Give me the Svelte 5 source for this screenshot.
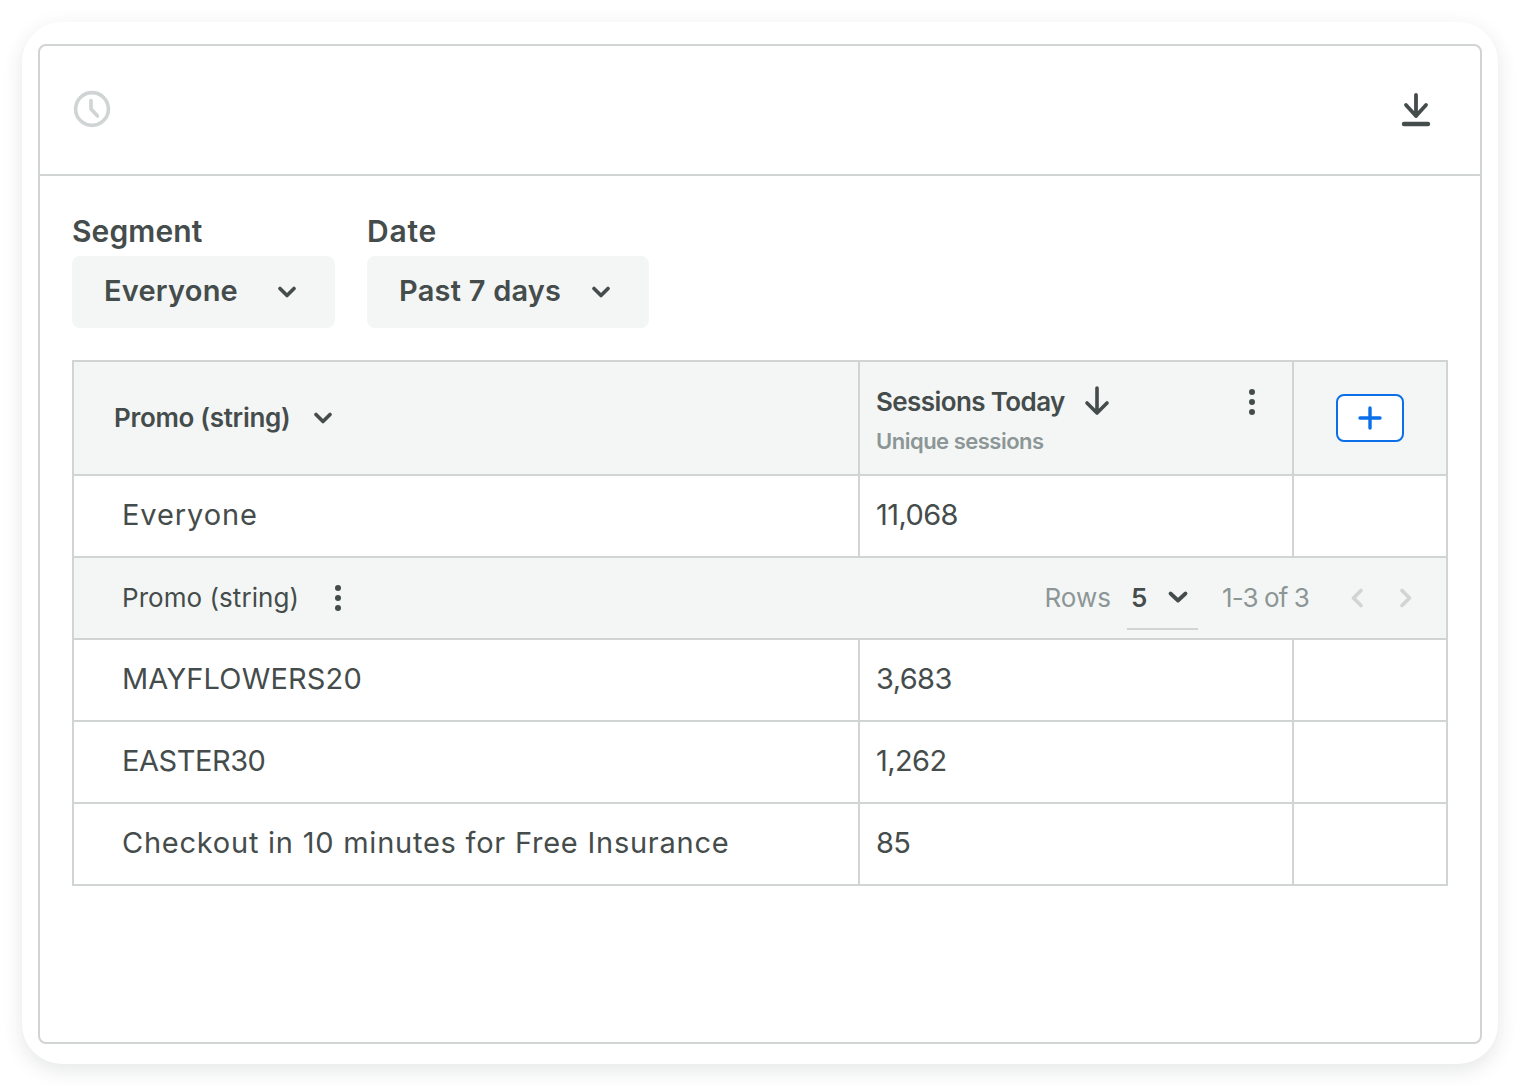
<script>
  const total = { name: "Everyone", sessions: "11,068", tracking: "0.9px" };
  const rows = [
    { name: "MAYFLOWERS20", sessions: "3,683", tracking: "0.17px" },
    { name: "EASTER30", sessions: "1,262", tracking: "-0.45px" },
    { name: "Checkout in 10 minutes for Free Insurance", sessions: "85", tracking: "0.76px" }
  ];
</script>

<main class="page">
  <div class="card">
    <div class="panel">
      <header class="top">
        <svg class="clock" width="38" height="38" viewBox="0 0 38 38" fill="none" stroke="#d0d4d4" stroke-width="3.6" stroke-linecap="round" stroke-linejoin="round">
          <circle cx="19" cy="19" r="16.4" />
          <path d="M18 10.5v8.5l6.5 7" />
        </svg>
        <svg class="download" width="30" height="36" viewBox="0 0 30 36" fill="none" stroke="#454c4c" stroke-linecap="round" stroke-linejoin="round">
          <path d="M15 2v21M5 12l10 11 10-11" stroke-width="3.8" />
          <path d="M3 31h24" stroke-width="4.4" />
        </svg>
      </header>

      <section class="content">
        <div class="filters">
          <div class="filter">
            <span class="label">Segment</span>
            <div class="select seg">
              <span>Everyone</span>
              <svg width="20" height="12" viewBox="0 0 20 12" fill="none" stroke="#454c4c" stroke-width="3.6" stroke-linecap="round" stroke-linejoin="round"><path d="M3 2.5l7 7 7-7" /></svg>
            </div>
          </div>
          <div class="filter">
            <span class="label date-label">Date</span>
            <div class="select date">
              <span>Past 7 days</span>
              <svg width="20" height="12" viewBox="0 0 20 12" fill="none" stroke="#454c4c" stroke-width="3.6" stroke-linecap="round" stroke-linejoin="round"><path d="M3 2.5l7 7 7-7" /></svg>
            </div>
          </div>
        </div>

        <div class="table">
          <div class="row head">
            <div class="cell first">
              <span class="col-name">Promo (string)</span>
              <svg width="20" height="12" viewBox="0 0 20 12" fill="none" stroke="#454c4c" stroke-width="3.6" stroke-linecap="round" stroke-linejoin="round"><path d="M3 2.5l7 7 7-7" /></svg>
            </div>
            <div class="cell second">
              <div class="metric">
                <div class="metric-top">
                  <span class="col-name">Sessions Today</span>
                  <svg width="26" height="30" viewBox="0 0 26 30" fill="none" stroke="#454c4c" stroke-width="3.6" stroke-linecap="round" stroke-linejoin="round"><path d="M13 2v25M3 17l10 10 10-10" /></svg>
                </div>
                <span class="sub">Unique sessions</span>
              </div>
              <svg class="dots" width="8" height="28" viewBox="0 0 8 28" fill="#454c4c"><circle cx="4" cy="4" r="3" /><circle cx="4" cy="14" r="3" /><circle cx="4" cy="24" r="3" /></svg>
            </div>
            <div class="cell third">
              <button class="add" aria-label="Add column">
                <svg width="24" height="24" viewBox="0 0 24 24" fill="none" stroke="#0a6fe8" stroke-width="3.4" stroke-linecap="round"><path d="M12 2v20M2 12h20" /></svg>
              </button>
            </div>
          </div>

          <div class="row">
            <div class="cell name"><span style:letter-spacing={total.tracking}>{total.name}</span></div>
            <div class="cell value"><span>{total.sessions}</span></div>
            <div class="cell"></div>
          </div>

          <div class="group">
            <div class="group-left">
              <span class="group-name">Promo (string)</span>
              <svg width="8" height="28" viewBox="0 0 8 28" fill="#454c4c"><circle cx="4" cy="4" r="3" /><circle cx="4" cy="14" r="3" /><circle cx="4" cy="24" r="3" /></svg>
            </div>
            <div class="pager">
              <span class="muted">Rows</span>
              <div class="page-size">
                <span class="size">5</span>
                <svg width="22" height="14" viewBox="0 0 22 14" fill="none" stroke="#454c4c" stroke-width="3.8" stroke-linecap="round" stroke-linejoin="round"><path d="M3.5 3.5l7.5 7 7.5-7" /></svg>
              </div>
              <span class="muted range">1-3 of 3</span>
              <svg class="prev" width="14" height="20" viewBox="0 0 14 20" fill="none" stroke="#d0d4d4" stroke-width="3.6" stroke-linecap="round" stroke-linejoin="round"><path d="M11 2.5l-7.5 7.5 7.5 7.5" /></svg>
              <svg class="next" width="14" height="20" viewBox="0 0 14 20" fill="none" stroke="#d0d4d4" stroke-width="3.6" stroke-linecap="round" stroke-linejoin="round"><path d="M3 2.5l7.5 7.5-7.5 7.5" /></svg>
            </div>
          </div>

          {#each rows as row}
            <div class="row">
              <div class="cell name"><span style:letter-spacing={row.tracking}>{row.name}</span></div>
              <div class="cell value"><span>{row.sessions}</span></div>
              <div class="cell"></div>
            </div>
          {/each}
        </div>
      </section>
    </div>
  </div>
</main>

<style>
  :global(body) {
    background: #ffffff;
    font-family: Inter, "Liberation Sans", sans-serif;
    color: #454c4c;
  }

  .page {
    padding: 22px;
    height: 1086px;
    box-sizing: border-box;
  }

  .card {
    height: 1042px;
    box-sizing: border-box;
    padding: 22px 16px 20px;
    border-radius: 40px;
    background: #ffffff;
    box-shadow: 0 6px 20px rgba(40, 50, 50, 0.12);
  }

  .panel {
    height: 100%;
    box-sizing: border-box;
    border: 2px solid #d0d4d4;
    border-radius: 8px;
  }

  .top {
    height: 130px;
    box-sizing: border-box;
    border-bottom: 2px solid #d0d4d4;
    padding: 0 49px 0 33px;
    display: flex;
    align-items: center;
    justify-content: space-between;
  }

  .clock {
    margin-bottom: 2px;
  }

  .download {
    margin-top: 2px;
  }

  .content {
    padding: 38px 32px 0;
  }

  .filters {
    display: flex;
    gap: 32px;
    margin-bottom: 32px;
  }

  .label {
    display: block;
    padding-bottom: 8px;
    font-size: 30px;
    font-weight: 600;
    line-height: 34px;
    letter-spacing: 0.1px;
  }

  .date-label {
    letter-spacing: 0.8px;
  }

  .select {
    height: 72px;
    box-sizing: border-box;
    padding: 0 32px;
    background: #f4f6f5;
    border-radius: 8px;
    display: flex;
    align-items: center;
    justify-content: space-between;
    font-size: 29px;
    font-weight: 600;
    letter-spacing: 0.22px;
  }

  .select span {
    margin-bottom: 4px;
  }

  .seg {
    width: 263px;
    padding-right: 38px;
  }

  .date {
    width: 282px;
    padding-right: 38px;
  }

  .table {
    border: 2px solid #d0d4d4;
  }

  .row {
    display: grid;
    grid-template-columns: 786px 434px 152px;
    height: 82px;
    border-bottom: 2px solid #d0d4d4;
    box-sizing: border-box;
  }

  .row:last-child {
    border-bottom: none;
    height: 80px;
  }

  .head {
    height: 114px;
    background: #f4f6f5;
  }

  .cell {
    display: flex;
    align-items: center;
    box-sizing: border-box;
    font-size: 29px;
    letter-spacing: -0.02em;
  }

  .cell:not(:last-child) {
    border-right: 2px solid #d0d4d4;
  }

  .name span,
  .value span {
    margin-bottom: 4px;
  }

  .first {
    padding-left: 40px;
    gap: 23px;
  }

  .first .col-name {
    margin-bottom: 2px;
    letter-spacing: -0.3px;
  }

  .second {
    padding: 0 36px 0 16px;
    justify-content: space-between;
  }

  .third {
    justify-content: center;
    padding-right: 0;
  }

  .col-name {
    font-size: 26px;
    font-weight: 600;
  }

  .metric {
    padding-top: 3px;
  }

  .metric-top {
    display: flex;
    align-items: center;
    gap: 19px;
  }

  .metric-top .col-name {
    letter-spacing: -0.6px;
  }

  .sub {
    display: block;
    margin-top: 11px;
    font-size: 22px;
    font-weight: 600;
    letter-spacing: -0.5px;
    color: #8c9696;
  }

  .dots {
    margin-bottom: 32px;
  }

  .add {
    width: 68px;
    height: 48px;
    padding: 0;
    background: #ffffff;
    border: 2px solid #0a6fe8;
    border-radius: 8px;
    display: flex;
    align-items: center;
    justify-content: center;
  }

  .name {
    padding-left: 48px;
  }

  .value {
    padding-left: 16px;
  }

  .group {
    height: 82px;
    box-sizing: border-box;
    background: #f4f6f5;
    border-bottom: 2px solid #d0d4d4;
    padding: 0 33px 0 48px;
    display: flex;
    align-items: center;
    justify-content: space-between;
  }

  .group-left {
    display: flex;
    align-items: center;
    gap: 35px;
  }

  .group-name {
    margin-bottom: 2px;
    font-size: 26px;
    letter-spacing: 0.05px;
  }

  .pager {
    display: flex;
    align-items: center;
    font-size: 26px;
  }

  .muted {
    margin-bottom: 2px;
    color: #8c9696;
  }

  .page-size {
    width: 71px;
    height: 64px;
    box-sizing: border-box;
    margin-left: 16px;
    padding: 0 9px 0 4px;
    border-bottom: 2px solid #d0d4d4;
    display: flex;
    align-items: center;
    justify-content: space-between;
  }

  .size {
    font-weight: 600;
  }

  .range {
    margin-left: 24px;
    letter-spacing: -0.9px;
  }

  .prev {
    margin-left: 41px;
  }

  .next {
    margin-left: 35px;
  }
</style>
